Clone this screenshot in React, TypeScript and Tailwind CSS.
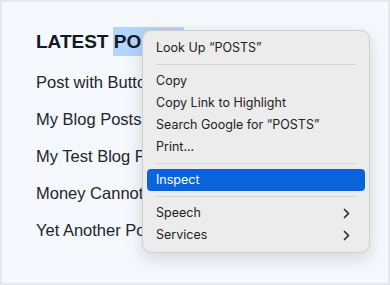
import React from "react";

const posts = [
  "Post with Buttons",
  "My Blog Posts",
  "My Test Blog Post",
  "Money Cannot Buy Happiness",
  "Yet Another Post",
];

const Chevron: React.FC = () => (
  <svg width="7" height="11" viewBox="0 0 7 11" fill="none">
    <path d="M1.5 1.5 L5.5 5.5 L1.5 9.5" stroke="#2a2a2a" strokeWidth="1.7" strokeLinecap="round" strokeLinejoin="round" />
  </svg>
);

const Sep: React.FC = () => (
  <div className="h-[11px] flex items-center px-[13px]">
    <div className="h-px w-full bg-[#d3d3d3]" />
  </div>
);

const Item: React.FC<{ label: string; active?: boolean; sub?: boolean }> = ({ label, active, sub }) => (
  <div
    className={
      active
        ? "h-[22px] mx-[4px] px-[9px] rounded-[4px] bg-[#0b63dc] text-white flex items-center justify-between"
        : "h-[22px] mx-[4px] px-[9px] text-[#222222] flex items-center justify-between"
    }
  >
    <span>{label}</span>
    {sub && (
      <span className="pr-[6px] flex items-center">
        <Chevron />
      </span>
    )}
  </div>
);

const ContextMenu: React.FC = () => (
  <div
    className="absolute left-[140px] top-[28px] w-[228px] py-[6px] rounded-[9px] border border-[#cfcfcf] bg-[#ececec] shadow-[0_6px_18px_rgba(0,0,0,0.14)] text-[12.5px] leading-[22px]"
    style={{ fontFamily: "Inter, 'Noto Sans', sans-serif" }}
  >
    <Item label="Look Up “POSTS”" />
    <Sep />
    <Item label="Copy" />
    <Item label="Copy Link to Highlight" />
    <Item label="Search Google for “POSTS”" />
    <Item label="Print..." />
    <Sep />
    <Item label="Inspect" active />
    <Sep />
    <Item label="Speech" sub />
    <Item label="Services" sub />
  </div>
);

export default function App() {
  return (
    <div className="relative w-[390px] h-[285px] overflow-hidden border-2 border-[#e6e8eb] bg-[#f5f8fc]">
      <div
        className="flex flex-col pl-[34px] pt-[25px]"
        style={{ fontFamily: "'Liberation Sans', Arial, sans-serif" }}
      >
        <h2 className="text-[19px] leading-[29px] font-bold text-[#111827] whitespace-nowrap">
          LATEST <span className="inline-block bg-[#b3d4fd] -ml-[1px] pl-[1px] pr-[6px]">POSTS</span>
        </h2>
        <ul className="mt-[8px] flex flex-col">
          {posts.map((p) => (
            <li key={p} className="text-[16.5px] leading-[37px] text-[#1f2430] whitespace-nowrap">
              {p}
            </li>
          ))}
        </ul>
      </div>
      <ContextMenu />
    </div>
  );
}
